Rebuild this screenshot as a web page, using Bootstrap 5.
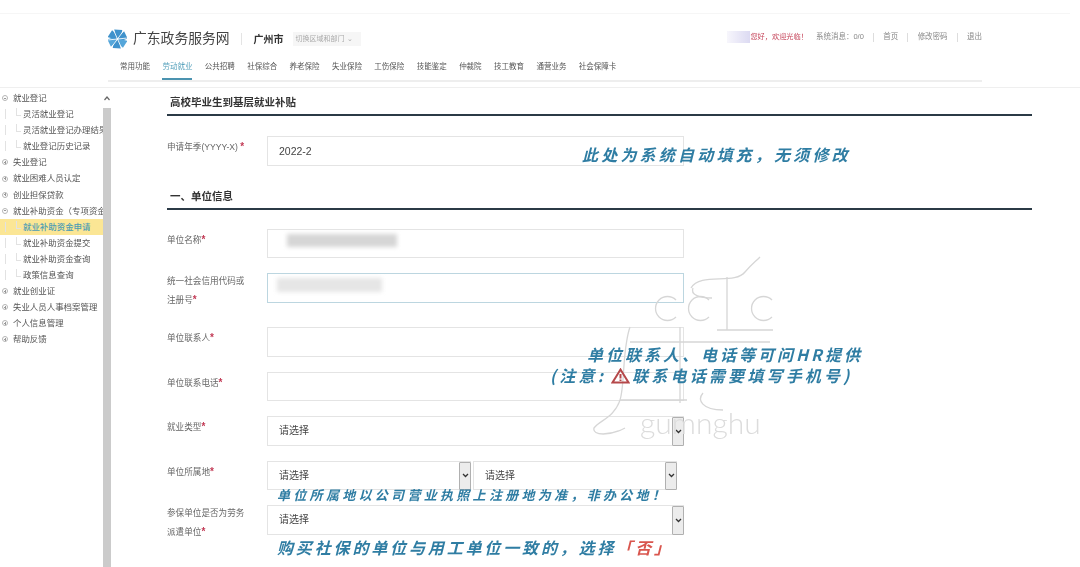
<!DOCTYPE html>
<html lang="zh-CN">
<head>
<meta charset="utf-8">
<title>广东政务服务网</title>
<link href="https://cdn.jsdelivr.net/npm/bootstrap@5.3.0/dist/css/bootstrap.min.css" rel="stylesheet">
<style>
html,body{height:567px;overflow:hidden}
body{font-family:"Liberation Sans","Noto Sans CJK SC",sans-serif;color:#555;background:#fff;position:relative}
.soft{filter:blur(.35px)}
.topline{height:14px;border-bottom:1px solid #f6f6f6;margin:0 10px 0 0}
.head-wrap{padding:2px 98px 0 108px;height:48px}
.gov-title{font-size:13.8px;color:#444;margin-left:6px;line-height:22px}
.head-sep{width:1px;height:12px;background:#e4e4e4;margin:0 12px 0 11px}
.city{font-size:10px;font-weight:700;color:#333;margin-right:9px}
.switcher{width:68px;height:14px;background:#f6f6f6;font-size:7px;color:#aaa;line-height:14px;padding-left:3px}
.hello{font-size:7.5px;color:#888;margin-top:-4px}
.hello .smear{width:23px;height:12px;background:linear-gradient(90deg,#f7f6fc,#dcdaf2)}
.hello .red{color:#c6475c;white-space:nowrap;font-size:7.2px}
.hello i{display:block;width:1px;height:9px;background:#ddd;margin:0 9.2px}
.nav-strip{margin:0 98px 0 108px;height:20px;border-bottom:2px solid #eee;padding-left:12px;gap:12.4px;font-size:7.5px;color:#555;line-height:10px}
.nav-strip span{white-space:nowrap;height:18px}
.nav-strip span.on{color:#59a3bd;border-bottom:2px solid #4b93b0}
.page-rule{height:6px;border-bottom:1px solid #efefef}
.side{width:111px;flex:none;height:480px;position:relative;padding-top:2px}
.side-list{width:103px;overflow:hidden;font-size:8.45px;line-height:16.1px;color:#555;white-space:nowrap}
.tree-top{padding-left:2px;display:flex;align-items:center;height:16.1px}
.tree-top b{display:inline-block;width:6px;height:6px;border:1px solid #b5b5b5;border-radius:50%;margin-right:5px;flex:none;position:relative}
.tree-top b.plus::after,.tree-top b.minus::after{content:"";position:absolute;left:1px;top:1px;width:2px;height:1px;background:#999;margin-top:.5px}
.tree-top b.plus::before{content:"";position:absolute;left:1.5px;top:.5px;width:1px;height:3px;background:#999}
.tree-leaf{padding-left:23px;height:16.1px;position:relative}
.tree-leaf::before{content:"";position:absolute;left:5px;top:3px;height:10px;border-left:1px solid #e2e2e2}
.tree-leaf::after{content:"";position:absolute;left:16px;top:2px;height:8px;width:5px;border-left:1px solid #e2e2e2;border-bottom:1px solid #e2e2e2}
.tree-leaf.picked{background:#fbe695;color:#4d9db4;font-weight:500}
.rail{position:absolute;left:103px;top:0;width:8px;bottom:0;background:#fff}
.rail-thumb{position:absolute;top:20px;left:0;right:0;bottom:0;background:#cbcbcb}
.rail svg{position:absolute;left:1px;top:8px}
.form-area{padding-left:56px;width:921px;flex:none}
.sec-title{font-size:10.5px;font-weight:700;color:#333;line-height:14px;padding:7px 0 0 3px;height:28px;border-bottom:2px solid #2b3a46}
.sec-title.next{margin-top:23px;height:21px;padding-top:0}
.frow{display:flex;margin-top:15px}
.frow.first{margin-top:20px}
.frow.after-next{margin-top:19px}
.frow.tall{min-height:39px}
.flabel{width:100px;flex:none;font-size:8.6px;color:#666;line-height:17.5px;padding-top:2px}
.flabel.two{padding-top:0}
.flabel em{font-style:normal;color:#c23a55;font-size:10px;font-weight:700}
.ctl.form-control{width:417px;height:29.5px;border-radius:0;border:1px solid #e4e4e4;font-size:10.5px;color:#444;padding:0 11px;box-shadow:none}
.ctl.tinted.form-control{border-color:#bcd6e0}
.masked{position:relative}
.blot{position:absolute;background:#d6d6d6;filter:blur(2px)}
.pick{position:relative;height:29.5px;display:flex;border:1px solid #e4e4e4;background:#fff}
.pick select.form-select{flex:1;border:0;border-radius:0;background:none;padding:0 11px;font-size:10px;color:#444;height:100%;min-width:0;box-shadow:none;font-family:inherit}
.pick .drop{width:12px;background:#ececec;border:1px solid #b0b0b0;display:flex;align-items:center;justify-content:center;margin:0 -1px -1px 0;border-radius:1px}
.w417{width:417px}.w204{width:204px}
.note{position:absolute;white-space:nowrap;color:#2f7da3;font-style:italic;font-weight:700;line-height:1;font-family:"Noto Sans CJK SC",sans-serif;filter:blur(.3px)}
.note .hot{color:#d9564e}
.big{font-size:16px;letter-spacing:3.2px}
.mid{font-size:13px;letter-spacing:3.3px}
.warn{display:inline-block;vertical-align:-2px;margin:0 2px 0 5px}
.mark-art{position:absolute;left:590px;top:250px;pointer-events:none}
.mark-word{position:absolute;left:640px;top:407px;font-size:30px;color:#dcdcdc;font-weight:300;font-family:"Lato","Liberation Sans",sans-serif;line-height:1;filter:blur(.4px)}
</style>
</head>
<body>
<div class="topline"></div>
<div class="head-wrap d-flex align-items-center justify-content-between soft">
  <div class="d-flex align-items-center">
    <svg width="19" height="20" viewBox="-10 -10 20 20" aria-hidden="true">
      <g fill="#3f92cc">
        <path d="M-1 -.5 L-3.5 -10 L5 -9.5 L4 -3 Z"/>
        <path d="M-1 -.5 L-3.5 -10 L5 -9.5 L4 -3 Z" transform="rotate(60)"/>
        <path d="M-1 -.5 L-3.5 -10 L5 -9.5 L4 -3 Z" transform="rotate(120)" fill="#55a6da"/>
        <path d="M-1 -.5 L-3.5 -10 L5 -9.5 L4 -3 Z" transform="rotate(180)"/>
        <path d="M-1 -.5 L-3.5 -10 L5 -9.5 L4 -3 Z" transform="rotate(240)" fill="#55a6da"/>
        <path d="M-1 -.5 L-3.5 -10 L5 -9.5 L4 -3 Z" transform="rotate(300)"/>
      </g>
      <path d="M0 0 L-4 -9 M0 0 L5.8 -8 M0 0 L9.8 -1 M0 0 L4 9 M0 0 L-5.8 8 M0 0 L-9.8 1" stroke="#fff" stroke-width=".9"/>
    </svg>
    <span class="gov-title">广东政务服务网</span>
    <span class="head-sep"></span>
    <span class="city">广州市</span>
    <span class="switcher">切换区域和部门 ⌄</span>
  </div>
  <div class="hello d-flex align-items-center">
    <span class="smear"></span><span class="red">您好，欢迎光临！</span><span class="ms-2">系统消息：0/0</span><i></i><span>首页</span><i></i><span>修改密码</span><i></i><span>退出</span>
  </div>
</div>
<div class="nav-strip d-flex soft">
  <span>常用功能</span><span class="on">劳动就业</span><span>公共招聘</span><span>社保综合</span><span>养老保险</span><span>失业保险</span><span>工伤保险</span><span>技能鉴定</span><span>仲裁院</span><span>技工教育</span><span>通营业务</span><span>社会保障卡</span>
</div>
<div class="page-rule"></div>
<div class="d-flex">
  <aside class="side soft">
    <div class="side-list">
      <div class="tree-top"><b class="minus"></b>就业登记</div>
      <div class="tree-leaf">灵活就业登记</div>
      <div class="tree-leaf">灵活就业登记办理结果</div>
      <div class="tree-leaf">就业登记历史记录</div>
      <div class="tree-top"><b class="plus"></b>失业登记</div>
      <div class="tree-top"><b class="plus"></b>就业困难人员认定</div>
      <div class="tree-top"><b class="plus"></b>创业担保贷款</div>
      <div class="tree-top"><b class="minus"></b>就业补助资金（专项资金）</div>
      <div class="tree-leaf picked">就业补助资金申请</div>
      <div class="tree-leaf">就业补助资金提交</div>
      <div class="tree-leaf">就业补助资金查询</div>
      <div class="tree-leaf">政策信息查询</div>
      <div class="tree-top"><b class="plus"></b>就业创业证</div>
      <div class="tree-top"><b class="plus"></b>失业人员人事档案管理</div>
      <div class="tree-top"><b class="plus"></b>个人信息管理</div>
      <div class="tree-top"><b class="plus"></b>帮助反馈</div>
    </div>
    <div class="rail">
      <svg width="6" height="5" viewBox="0 0 6 5"><path d="M.5 4 L3 1 L5.5 4" fill="none" stroke="#666" stroke-width="1.2"/></svg>
      <div class="rail-thumb"></div>
    </div>
  </aside>
  <main class="form-area soft">
    <div class="sec-title">高校毕业生到基层就业补贴</div>
    <div class="frow first">
      <div class="flabel">申请年季(YYYY-X) <em>*</em></div>
      <input class="form-control ctl" value="2022-2">
    </div>
    <div class="sec-title next">一、单位信息</div>
    <div class="frow after-next">
      <div class="flabel">单位名称<em>*</em></div>
      <div class="masked">
        <input class="form-control ctl">
        <span class="blot" style="left:20px;top:5px;width:110px;height:13px"></span>
      </div>
    </div>
    <div class="frow tall">
      <div class="flabel two">统一社会信用代码或<br>注册号<em>*</em></div>
      <div class="masked">
        <input class="form-control ctl tinted">
        <span class="blot" style="left:10px;top:5px;width:105px;height:14px;background:#e6e6e6"></span>
      </div>
    </div>
    <div class="frow">
      <div class="flabel">单位联系人<em>*</em></div>
      <input class="form-control ctl">
    </div>
    <div class="frow">
      <div class="flabel">单位联系电话<em>*</em></div>
      <input class="form-control ctl">
    </div>
    <div class="frow">
      <div class="flabel">就业类型<em>*</em></div>
      <div class="pick w417"><select class="form-select"><option>请选择</option></select><span class="drop"><svg width="7" height="5" viewBox="0 0 7 5"><path d="M1 1 L3.5 3.5 L6 1" fill="none" stroke="#333" stroke-width="1.3"/></svg></span></div>
    </div>
    <div class="frow">
      <div class="flabel">单位所属地<em>*</em></div>
      <div class="d-flex" style="gap:2px">
        <div class="pick w204"><select class="form-select"><option>请选择</option></select><span class="drop"><svg width="7" height="5" viewBox="0 0 7 5"><path d="M1 1 L3.5 3.5 L6 1" fill="none" stroke="#333" stroke-width="1.3"/></svg></span></div>
        <div class="pick w204"><select class="form-select"><option>请选择</option></select><span class="drop"><svg width="7" height="5" viewBox="0 0 7 5"><path d="M1 1 L3.5 3.5 L6 1" fill="none" stroke="#333" stroke-width="1.3"/></svg></span></div>
      </div>
    </div>
    <div class="frow">
      <div class="flabel two">参保单位是否为劳务<br>派遣单位<em>*</em></div>
      <div class="pick w417"><select class="form-select"><option>请选择</option></select><span class="drop"><svg width="7" height="5" viewBox="0 0 7 5"><path d="M1 1 L3.5 3.5 L6 1" fill="none" stroke="#333" stroke-width="1.3"/></svg></span></div>
    </div>
  </main>
</div>

<svg class="mark-art" width="190" height="200" viewBox="590 250 190 200" fill="none" stroke="#d6d6d6" stroke-width="1.3" aria-hidden="true">
  <path d="M691 288 C700 272 735 285 745 272 C752 264 755 262 760 257"/>
  <path d="M693 288 C690 295 700 298 712 298"/>
  <path d="M676 300 a12 12 0 1 0 0 17"/>
  <path d="M709 300 a12 12 0 1 0 0 17"/>
  <path d="M772 300 a12 12 0 1 0 0 17"/>
  <path d="M727 277 V330"/>
  <path d="M717 330 H773"/>
  <path d="M630 342 H770"/>
  <path d="M630 327 C622 350 625 385 620 400 C614 418 600 420 594 428 C592 436 610 436 625 428"/>
  <path d="M680 327 V403"/>
  <path d="M620 400 H687"/>
  <path d="M703 393 C697 400 702 410 723 410"/>
</svg>
<div class="mark-word">gumnghu</div>

<div class="note big" style="left:582px;top:146px">此处为系统自动填充，无须修改</div>
<div class="note big" style="left:587px;top:346px;letter-spacing:3px">单位联系人、电话等可问HR提供</div>
<div class="note big" style="left:550px;top:367px">(注意:<svg class="warn" width="19" height="16" viewBox="0 0 19 16"><path d="M9.5 1.5 L17.5 14.5 H1.5 Z M9.5 6 V10.5 M9.5 11.5 V13" fill="none" stroke="#b5484a" stroke-width="2"/></svg>联系电话需要填写手机号)</div>
<div class="note mid" style="left:277px;top:488px">单位所属地以公司营业执照上注册地为准，非办公地！</div>
<div class="note big" style="left:277px;top:539px;letter-spacing:2.85px">购买社保的单位与用工单位一致的，选择<span class="hot">「否」</span></div>
</body>
</html>
